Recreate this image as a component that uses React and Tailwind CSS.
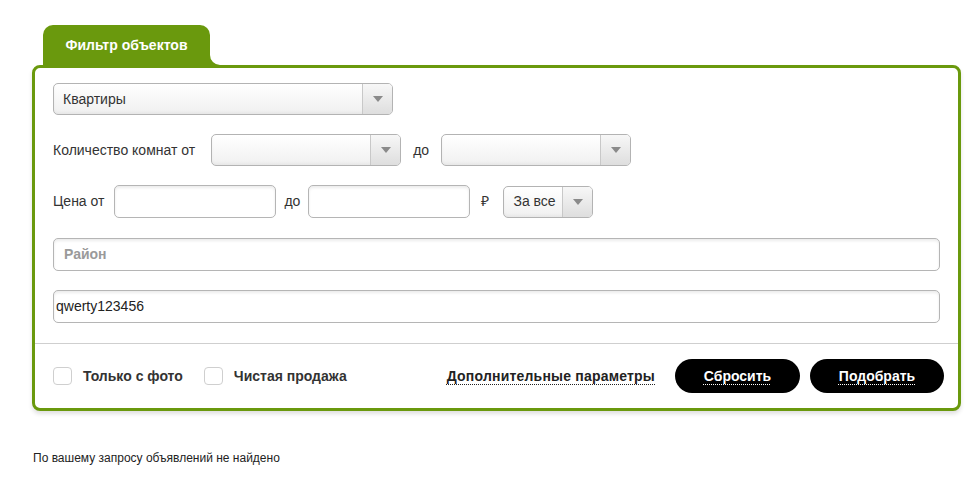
import React from "react";

const Arrow = () => (
  <div className="flex w-[30px] shrink-0 items-center justify-center self-stretch rounded-r-[4px] border-l border-[#c8c8c8] bg-gradient-to-b from-[#f7f7f7] to-[#dedede]">
    <svg width="10" height="6" viewBox="0 0 10 6"><path d="M0 0H10L5 6Z" fill="#8a8a8a" /></svg>
  </div>
);

const Select = ({ w, children }) => (
  <div className={`flex h-[32px] ${w} items-stretch rounded-[5px] border border-[#b3b3b3] bg-gradient-to-b from-white to-[#f0f0f0] shadow-[inset_0_-2px_3px_rgba(0,0,0,0.04)]`}>
    <div className="flex flex-1 items-center pl-[9px] text-[14px] text-[#333]">{children}</div>
    <Arrow />
  </div>
);

const Input = ({ w, children, cls = "" }) => (
  <div className={`flex h-[33px] ${w} items-center rounded-[5px] border border-[#b5b5b5] bg-white shadow-[inset_0_2px_3px_rgba(0,0,0,0.08)] ${cls}`}>{children}</div>
);

export default function App() {
  return (
    <div className="w-[973px] h-[482px] bg-white pt-[25px] pl-[32px]" style={{ fontFamily: '"Liberation Sans", Arial, sans-serif' }}>
      <div className="relative ml-[11px] flex h-[40px] w-[167px] items-center justify-center rounded-t-[10px] bg-[#6a990d] text-[14px] font-bold text-white">
        Фильтр объектов
        <svg className="absolute bottom-0 right-[-10px]" width="10" height="10" viewBox="0 0 10 10">
          <path d="M0 0 A10 10 0 0 0 10 10 H0 Z" fill="#6a990d" />
        </svg>
      </div>
      <div className="w-[929px] rounded-[8px] border-[3px] border-[#6a990d] bg-white shadow-[0_3px_4px_rgba(0,0,0,0.12)]">
        <div className="flex flex-col gap-[19px] px-[18px] pt-[15px] pb-[20px]">
          <Select w="w-[340px]">Квартиры</Select>
          <div className="flex items-center text-[14px] text-[#333]">
            <span className="mr-[16px]">Количество комнат от</span>
            <Select w="w-[190px]" />
            <span className="ml-[12px] mr-[12px]">до</span>
            <Select w="w-[190px]" />
          </div>
          <div className="flex items-center text-[14px] text-[#333]">
            <span className="mr-[10px]">Цена от</span>
            <Input w="w-[162px]" />
            <span className="ml-[8px] mr-[8px]">до</span>
            <Input w="w-[162px]" />
            <span className="ml-[11px] mr-[14px]">₽</span>
            <Select w="w-[90px]">За все</Select>
          </div>
          <div className="flex flex-col gap-[19px] pt-[1px]">
            <Input w="w-[887px]" cls="pl-[10px] text-[14px] font-bold text-[#9a9a9a]">Район</Input>
            <Input w="w-[887px]" cls="pl-[2px] text-[14px] text-[#222]">qwerty123456</Input>
          </div>
        </div>
        <div className="h-px bg-[#cfcfcf]" />
        <div className="flex h-[64px] items-center pl-[18px] pr-[14px] text-[14px] font-bold text-[#333]">
          <div className="h-[18px] w-[19px] rounded-[4px] border border-[#cfcfcf]" />
          <span className="ml-[11px]">Только с фото</span>
          <div className="ml-[21px] h-[18px] w-[19px] rounded-[4px] border border-[#cfcfcf]" />
          <span className="ml-[11px]">Чистая продажа</span>
          <span className="ml-auto mr-[20px] text-[#222] underline decoration-dotted decoration-1 underline-offset-[3px] tracking-[0.2px]">Дополнительные параметры</span>
          <div className="mr-[10px] flex h-[34px] w-[125px] items-center justify-center rounded-full bg-black text-white">
            <span className="underline decoration-dotted decoration-1 underline-offset-[3px]">Сбросить</span>
          </div>
          <div className="flex h-[34px] w-[134px] items-center justify-center rounded-full bg-black text-white">
            <span className="underline decoration-dotted decoration-1 underline-offset-[3px]">Подобрать</span>
          </div>
        </div>
      </div>
      <div className="mt-[38px] pl-[1px] text-[12px] text-[#222]">По вашему запросу объявлений не найдено</div>
    </div>
  );
}
